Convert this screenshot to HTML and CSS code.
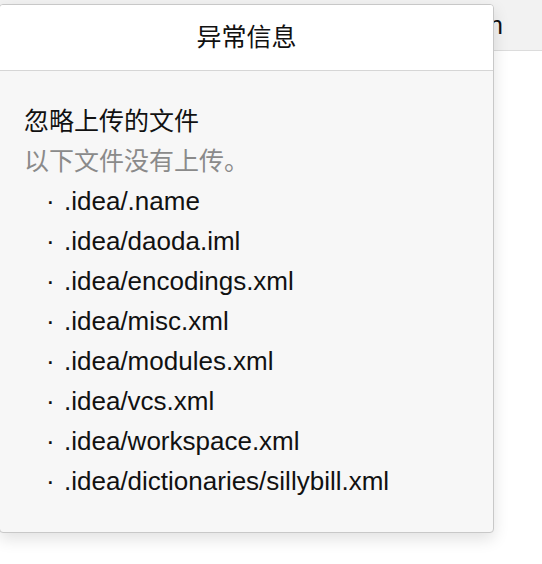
FILE: index.html
```html
<!DOCTYPE html>
<html lang="zh-CN">
<head>
    <meta charset="UTF-8">
    <meta name="viewport" content="width=device-width, initial-scale=1.0">
    <title>异常信息</title>
    <link rel="stylesheet" href="styles.css">
</head>
<body>
    <div class="topbar">
        <span class="topbar-action">Open</span>
    </div>

    <div class="modal">
        <div class="modal-header">异常信息</div>
        <div class="modal-body">
            <div class="summary">忽略上传的文件</div>
            <div class="hint">以下文件没有上传。</div>
            <ul class="file-list">
                <li>.idea/.name</li>
                <li>.idea/daoda.iml</li>
                <li>.idea/encodings.xml</li>
                <li>.idea/misc.xml</li>
                <li>.idea/modules.xml</li>
                <li>.idea/vcs.xml</li>
                <li>.idea/workspace.xml</li>
                <li>.idea/dictionaries/sillybill.xml</li>
            </ul>
        </div>
    </div>
</body>
</html>
```

FILE: styles.css
```css
body {
    margin: 0;
    font-family: "Liberation Sans", "Noto Sans CJK SC", sans-serif;
    font-size: 25px;
    color: #111;
    background-color: white;
}
.topbar {
    height: 50px;
    background-color: #f2f2f2;
    border-bottom: 1px solid #dcdcdc;
    display: flex;
    justify-content: flex-end;
    align-items: center;
    padding-right: 39px;
}
.topbar-action {
    line-height: 50px;
}
.modal {
    position: absolute;
    top: 4px;
    left: -1px;
    width: 493px;
    background-color: #f7f7f7;
    border: 1px solid #c8c8c8;
    border-radius: 4px;
    box-shadow: 0 6px 16px rgba(0,0,0,0.12);
    overflow: hidden;
}
.modal-header {
    height: 65px;
    line-height: 65px;
    text-align: center;
    background-color: white;
    border-bottom: 1px solid #d6d6d6;
}
.modal-body {
    padding: 30px 24px 31px;
    line-height: 40px;
}
.hint {
    color: #8a8a8a;
}
.file-list {
    list-style: none;
    margin: 0;
    padding: 0 0 0 22px;
    font-size: 26px;
}
.file-list li::before {
    content: "·";
    display: inline-block;
    width: 18px;
}
```
